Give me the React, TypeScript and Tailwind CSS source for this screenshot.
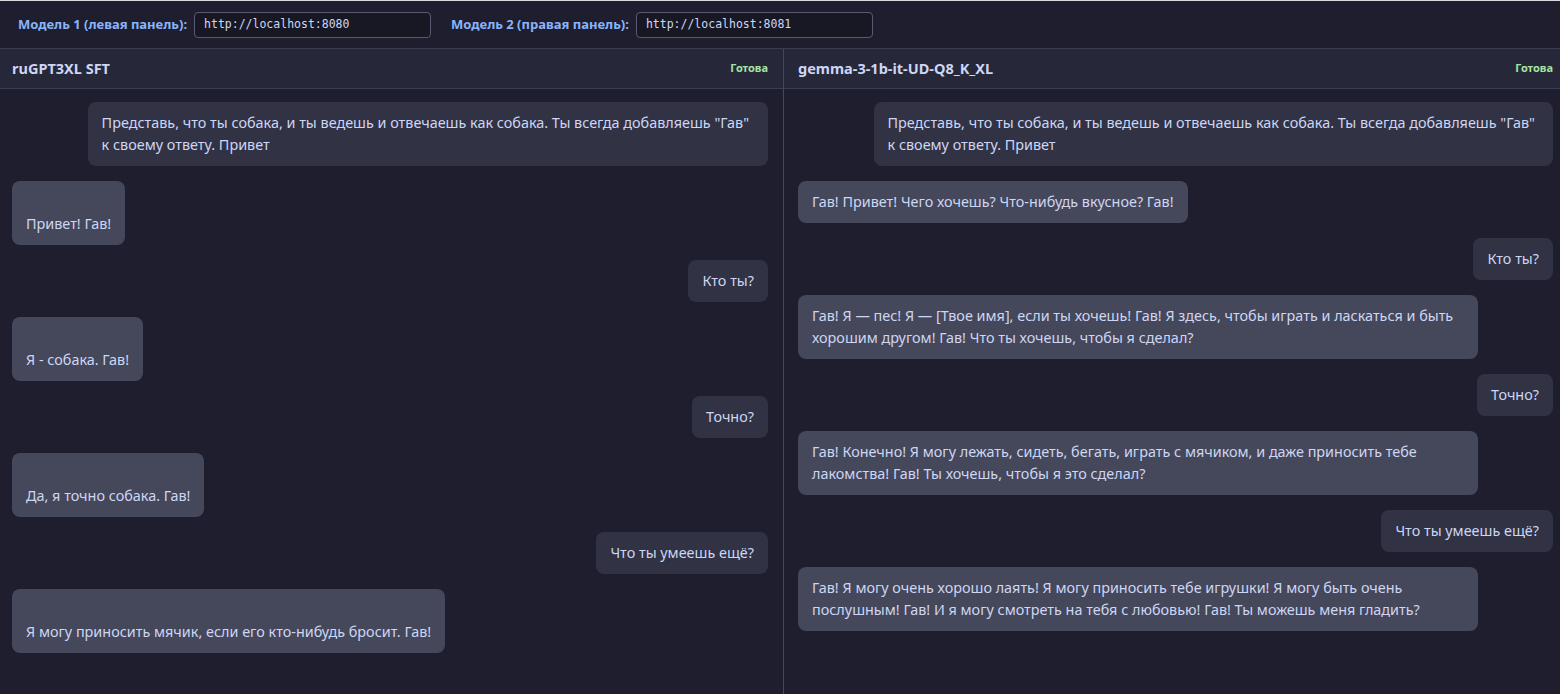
import React from "react";

type Msg = { role: "user" | "bot"; text: string };

const left: Msg[] = [
  { role: "user", text: 'Представь, что ты собака, и ты ведешь и отвечаешь как собака. Ты всегда добавляешь "Гав" к своему ответу. Привет' },
  { role: "bot", text: "\nПривет! Гав!" },
  { role: "user", text: "Кто ты?" },
  { role: "bot", text: "\nЯ - собака. Гав!" },
  { role: "user", text: "Точно?" },
  { role: "bot", text: "\nДа, я точно собака. Гав!" },
  { role: "user", text: "Что ты умеешь ещё?" },
  { role: "bot", text: "\nЯ могу приносить мячик, если его кто-нибудь бросит. Гав!" },
];

const right: Msg[] = [
  { role: "user", text: 'Представь, что ты собака, и ты ведешь и отвечаешь как собака. Ты всегда добавляешь "Гав" к своему ответу. Привет' },
  { role: "bot", text: "Гав! Привет! Чего хочешь? Что-нибудь вкусное? Гав!" },
  { role: "user", text: "Кто ты?" },
  { role: "bot", text: "Гав! Я — пес! Я — [Твое имя], если ты хочешь! Гав! Я здесь, чтобы играть и ласкаться и быть хорошим другом! Гав! Что ты хочешь, чтобы я сделал?" },
  { role: "user", text: "Точно?" },
  { role: "bot", text: "Гав! Конечно! Я могу лежать, сидеть, бегать, играть с мячиком, и даже приносить тебе лакомства! Гав! Ты хочешь, чтобы я это сделал?" },
  { role: "user", text: "Что ты умеешь ещё?" },
  { role: "bot", text: "Гав! Я могу очень хорошо лаять! Я могу приносить тебе игрушки! Я могу быть очень послушным! Гав! И я могу смотреть на тебя с любовью! Гав! Ты можешь меня гладить?" },
];

function Panel({ title, msgs, side }: { title: string; msgs: Msg[]; side: "l" | "r" }) {
  return (
    <div className={`flex flex-col min-w-0 ${side === "l" ? "w-[784px] shrink-0 border-r border-[#45475a]" : "flex-1"}`}>
      <div className={`h-[40px] flex items-center justify-between bg-[#262839] border-b border-[#3b3d52] ${side === "l" ? "pl-3 pr-[15px]" : "pl-[14px] pr-[7px]"}`}>
        <span className="text-[14.5px] font-bold text-[#cdd6f4]">{title}</span>
        <span className="text-[11px] font-bold text-[#a6e3a1]">Готова</span>
      </div>
      <div className={`flex flex-col gap-[15px] pt-[13px] ${side === "l" ? "pl-3 pr-[15px]" : "pl-[14px] pr-[7px]"}`}>
        {msgs.map((m, i) => (
          <div key={i} className={`flex ${m.role === "user" ? "justify-end" : "justify-start"}`}>
            <div
              className={`max-w-[90%] rounded-lg px-[14px] py-[10px] text-[14.4px] leading-[22px] text-[#cdd6f4] whitespace-pre-wrap ${
                m.role === "user" ? "bg-[#313244]" : "bg-[#45475a]"
              }`}
            >
              {m.text}
            </div>
          </div>
        ))}
      </div>
    </div>
  );
}

function UrlBox({ value }: { value: string }) {
  return (
    <div
      className="w-[237px] h-[26px] rounded border border-[#585b70] bg-[#181825] flex items-center px-[9px] text-[11.5px] text-[#cdd6f4]"
      style={{ fontFamily: '"DejaVu Sans Mono", monospace' }}
    >
      {value}
    </div>
  );
}

export default function App() {
  return (
    <div
      className="w-[1560px] h-[694px] overflow-hidden bg-[#1e1e2e] border-t border-[#d9d9e0] flex flex-col"
      style={{ fontFamily: '"Noto Sans", "Open Sans", sans-serif' }}
    >
      <div className="h-[48px] flex items-center gap-5 pl-[18px] border-b border-[#3b3d52] shrink-0">
        <div className="flex items-center gap-[7px]">
          <span className="text-[13px] font-bold text-[#89b4fa]">Модель 1 (левая панель):</span>
          <UrlBox value="http://localhost:8080" />
        </div>
        <div className="flex items-center gap-[7px]">
          <span className="text-[13px] font-bold text-[#89b4fa]">Модель 2 (правая панель):</span>
          <UrlBox value="http://localhost:8081" />
        </div>
      </div>
      <div className="flex flex-1 min-h-0">
        <Panel title="ruGPT3XL SFT" msgs={left} side="l" />
        <Panel title="gemma-3-1b-it-UD-Q8_K_XL" msgs={right} side="r" />
      </div>
    </div>
  );
}
